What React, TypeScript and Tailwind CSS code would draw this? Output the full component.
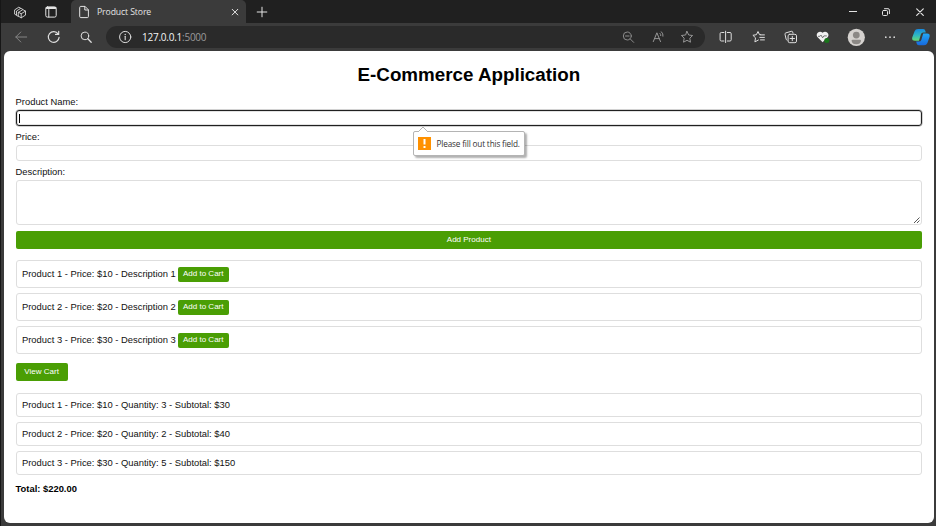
import React from "react";

type IconProps = { className?: string; children: React.ReactNode; size?: number };

function Icon({ className = "", children, size = 14 }: IconProps) {
  return (
    <svg
      width={size}
      height={size}
      viewBox="0 0 14 14"
      fill="none"
      stroke="currentColor"
      strokeWidth="1"
      strokeLinecap="round"
      strokeLinejoin="round"
      className={"shrink-0 " + className}
    >
      {children}
    </svg>
  );
}

const products = [
  { name: "Product 1", price: 10, description: "Description 1" },
  { name: "Product 2", price: 20, description: "Description 2" },
  { name: "Product 3", price: 30, description: "Description 3" },
];

const cart = [
  { name: "Product 1", price: 10, quantity: 3, subtotal: 30 },
  { name: "Product 2", price: 20, quantity: 2, subtotal: 40 },
  { name: "Product 3", price: 30, quantity: 5, subtotal: 150 },
];

const star = "M7 1.4 8.7 5 12.6 5.5 9.8 8.2 10.5 12.2 7 10.3 3.5 12.2 4.2 8.2 1.4 5.5 5.3 5Z";

function TitleBar() {
  return (
    <div className="flex h-[23px] shrink-0 items-center bg-[#202020] text-[#e4e4e4]">
      <Icon className="ml-[12px]">
        <path
          d="M3.3 10.2 1.6 9.1V4.9L5.8 2.2 7.4 3.1M5.4 11.5 3.5 10.3V6L7.8 3.3 9.6 4.3M5.6 7.3 9.9 4.6 12.5 6.1V10.1L8.2 12.8 5.6 11.3ZM5.6 7.3 8.2 8.8 12.5 6.1M8.2 8.8V12.8"
          strokeWidth=".85"
        />
      </Icon>
      <Icon className="ml-[17px]">
        <rect x="1.8" y="1.9" width="10.4" height="10.2" rx="1.6" />
        <path d="M2.6 3H11.4" strokeWidth="2" />
        <path d="M4.8 4.5V12" />
      </Icon>
      <div className="ml-[13px] flex h-full w-[175px] items-center rounded-t-[5px] bg-[#3b3b3b]">
        <Icon className="ml-[6px]">
          <path d="M2.7 2.4Q2.7 1.4 3.7 1.4H8L11.4 4.8V11.6Q11.4 12.6 10.4 12.6H3.7Q2.7 12.6 2.7 11.6ZM7.8 1.6V5H11.2" />
        </Icon>
        <span className="ml-[6px] w-[60px] pt-[2px] font-['Open_Sans',sans-serif] text-[8.7px] tracking-[-0.12px] whitespace-nowrap">
          Product Store
        </span>
        <Icon className="ml-[71px]">
          <path d="m4.2 4.3 5.6 5.6m0-5.6L4.2 9.9" />
        </Icon>
      </div>
      <Icon className="ml-[9px]">
        <path d="M7 2.2V11.8M2.2 7H11.8" />
      </Icon>
      <Icon className="ml-auto">
        <path d="M3.4 6.5H10.6" />
      </Icon>
      <Icon className="ml-[19px]">
        <rect x="3.5" y="5.5" width="5" height="5" rx="1" />
        <path d="M5.5 3.7H9Q10.4 3.7 10.4 5.1V8.6" />
      </Icon>
      <Icon className="mr-[9px] ml-[20px]">
        <path d="m3.7 3.8 6.6 6.6m0-6.6-6.6 6.6" strokeWidth="1.2" />
      </Icon>
    </div>
  );
}

function Toolbar() {
  return (
    <div className="flex h-7 shrink-0 items-center bg-[#3b3b3b] text-[#dedede]">
      <Icon className="ml-[13px] text-[#858585]">
        <path d="M12.7 7H1.8M6.8 2 1.8 7 6.8 12" />
      </Icon>
      <Icon className="ml-[19px]">
        <path d="M11.2 4A5.4 5.4 0 1 0 12.1 7.4M11.7 1.3V4.4H8.5" strokeWidth="1.15" />
      </Icon>
      <Icon className="ml-[18px]">
        <circle cx="5.9" cy="5.9" r="3.8" />
        <path d="m8.8 8.8 3.4 3.4" strokeWidth="1.3" />
      </Icon>
      <div className="ml-[13px] flex h-[22px] w-[599px] items-center rounded-full bg-[#2a2a2a]">
        <Icon className="ml-[12px]">
          <circle cx="7.2" cy="7" r="5.6" />
          <path d="M7.2 6.3V9.7" strokeWidth="1.1" />
          <path d="M7.2 4.3V4.4" strokeWidth="1.3" />
        </Icon>
        <span className="ml-[10px] font-['Open_Sans',sans-serif] text-[10px] tracking-[-0.24px] whitespace-nowrap text-[#9a9a9a]">
          <span className="text-[#f5f5f5]">127.0.0.1</span>:5000
        </span>
        <Icon className="ml-auto text-[#8c8c8c]">
          <circle cx="6.3" cy="6" r="4" />
          <path d="m9.3 9 3.4 3.4M4.5 6H8.1" />
        </Icon>
        <Icon className="ml-[16px] text-[#969696]">
          <path d="M2.3 11.6 5.9 2.8 9.5 11.6M3.6 8.6H8.2M9 3.4Q10 4.3 9.8 5.6M10.4 1.8Q12.5 3.6 12 6.2" />
        </Icon>
        <Icon className="mr-[11px] ml-[15px] text-[#969696]">
          <path d={star} />
        </Icon>
      </div>
      <Icon className="ml-[14px]">
        <path d="M4.9 2.5H2.3Q1.1 2.5 1.1 3.7V9.8Q1.1 11 2.3 11H4.9M8.3 2.5H11Q12.2 2.5 12.2 3.7V9.8Q12.2 11 11 11H8.3M6.6 1.2V12.6" />
      </Icon>
      <Icon className="ml-[19px]">
        <path d="M8.6 4.7H7.5L6 1.5 4.4 4.7 .9 5.3 3.5 7.8 2.9 11.9 6.4 10M8.8 4.9H12.4M7.8 7.4H12.4M8.5 9.9H12.4" />
      </Icon>
      <Icon className="ml-[18px]">
        <path d="M3 10.2Q2.3 9.9 2.1 9.1L1 4.2Q.8 3.2 1.8 2.9L7.4 1.3Q8.4 1.1 8.7 2L9 3.2" />
        <rect x="4.1" y="4.3" width="8.4" height="8.4" rx="1.6" />
        <path d="M8.3 6.3V10.7M6.1 8.5H10.5" />
      </Icon>
      <Icon className="ml-[18px]">
        <path d="M6.6 12.2 1.4 7C-1 4 3.4-.3 6.6 2.8 9.8-.3 14.2 4 11.8 7Z" fill="#f0f0f0" stroke="none" />
        <path d="M2.4 6.3H4L5 5.1 6.6 7.8 7.9 5.9H10.4" stroke="#666" strokeWidth=".9" />
        <circle cx="10.8" cy="10.6" r="2.5" fill="#18751a" stroke="none" />
      </Icon>
      <svg width="18" height="18" viewBox="0 0 18 18" className="ml-[17px] shrink-0">
        <circle cx="9.3" cy="9.3" r="8.6" fill="#d5d2cf" />
        <circle cx="9.3" cy="7.1" r="3.4" fill="#8b8885" />
        <path
          d="M4.6 12.8Q4.6 11.7 5.7 11.7H12.9Q14 11.7 14 12.8Q13.5 16.3 9.3 16.3T4.6 12.8Z"
          fill="#8b8885"
        />
      </svg>
      <Icon className="ml-[18px]">
        <path d="M2.8 7.2V7.2M7 7.2V7.2M11.2 7.2V7.2" strokeWidth="1.7" />
      </Icon>
      <svg width="18" height="18" viewBox="0 0 18 18" className="ml-[15px] shrink-0">
        <defs>
          <linearGradient id="copilot-left" x1="0" y1="0" x2="0" y2="1">
            <stop stopColor="#1689df" />
            <stop offset=".55" stopColor="#30b9c1" />
            <stop offset="1" stopColor="#65da75" />
          </linearGradient>
          <linearGradient id="copilot-right" x1="0" y1="0" x2="0" y2="1">
            <stop stopColor="#22a8f5" />
            <stop offset="1" stopColor="#1769dd" />
          </linearGradient>
        </defs>
        <path
          d="M6 1H11.3Q13 1 13.4 3L13.8 4.6H11.2Q9.4 4.6 8.9 6.3L7 12.7H3Q-.6 12.7.3 9.2L2.6 3.3Q3.5 1 6 1Z"
          fill="url(#copilot-left)"
        />
        <path
          d="M12.1 17.2H6.8Q5 17.2 4.6 15.2L4.2 13.6H6.9Q8.8 13.6 9.3 11.9L11.2 5.5H15Q18.4 5.5 17.5 9L15.4 14.9Q14.4 17.2 12.1 17.2Z"
          fill="url(#copilot-right)"
        />
      </svg>
    </div>
  );
}

function ValidationTip() {
  return (
    <div className="absolute top-[20px] left-[396.5px] z-10 flex h-[25px] w-[112px] items-center rounded-[2px] border border-[#b4b4b4] bg-white shadow-[2px_2px_2px_#00000050]">
      <svg width="10" height="6" viewBox="0 0 10 6" className="absolute top-[-6px] left-[4px]">
        <path d="M0 6 5 1 10 6" fill="#fff" stroke="#b4b4b4" />
      </svg>
      <span className="mb-px ml-[4px] flex h-[13px] w-[13px] items-center justify-center bg-[#ff9100]">
        <svg width="3" height="9" viewBox="0 0 3 9">
          <path d="M.5 0H2.5V5.5H.5ZM.5 7H2.5V9H.5Z" fill="#fff" />
        </svg>
      </span>
      <span className="ml-[5.5px] font-['Open_Sans',sans-serif] text-[8.2px] tracking-[-0.16px] whitespace-nowrap text-[#333]">
        Please fill out this field.
      </span>
    </div>
  );
}

export default function App() {
  return (
    <div className="flex h-[526px] w-[936px] flex-col overflow-hidden border-l border-[#161616] bg-[#3b3b3b] font-['Liberation_Sans',Arial,sans-serif] text-[9.4px] leading-[11px] text-[#111]">
      <TitleBar />
      <Toolbar />
      <main className="mr-[2.5px] ml-[3px] h-[472px] rounded-[6px] bg-white pr-[11.4px] pl-[11.6px]">
        <h1 className="pt-[13px] text-center text-[18.8px] leading-[22px] font-bold text-black">
          E-Commerce Application
        </h1>
        <form className="mt-[10px] flex flex-col">
          <label>Product Name:</label>
          <div className="relative mt-[3px] flex h-[16px] items-center rounded-[3px] border border-[#202020] pl-[2px] shadow-[0_0_0_0.5px_#20202066,inset_0_0_0_0.5px_#20202040]">
            <span className="h-[9px] w-px bg-black" />
            <ValidationTip />
          </div>
          <label className="mt-[5px]">Price:</label>
          <div className="mt-[3px] h-[16px] rounded-[3px] border border-[#dedede]" />
          <label className="mt-[5px]">Description:</label>
          <div className="mt-[3px] flex h-[45px] items-end justify-end rounded-[3px] border border-[#dedede]">
            <svg width="8" height="8" viewBox="0 0 8 8">
              <path d="M1 7 6.5 1.5M4 7 6.5 4.5" stroke="#444" strokeWidth=".9" />
            </svg>
          </div>
          <div className="mt-[5.5px] flex h-[18px] items-center justify-center rounded-[2px] bg-[#4a9e04] pb-px text-[8px] text-white">
            Add Product
          </div>
        </form>
        <ul className="mt-[11.5px] flex flex-col gap-[5px]">
          {products.map((p) => (
            <li
              key={p.name}
              className="flex h-[28px] items-center rounded-[3px] border border-[#dedede] pl-[5.4px]"
            >
              <span className="pb-[2px]">
                {p.name} - Price: ${p.price} - {p.description}
              </span>
              <span className="ml-[2px] flex h-[15px] w-[51px] items-center justify-center rounded-[2px] bg-[#4a9e04] pb-px text-[8px] whitespace-nowrap text-white">
                Add to Cart
              </span>
            </li>
          ))}
        </ul>
        <div className="mt-[9px] flex h-[18px] w-[52px] items-center justify-center rounded-[2px] bg-[#4a9e04] pb-px text-[8px] text-white">
          View Cart
        </div>
        <ul className="mt-[12px] flex flex-col gap-[5px]">
          {cart.map((c) => (
            <li
              key={c.name}
              className="flex h-[24px] items-center rounded-[3px] border border-[#dedede] pb-px pl-[5.4px]"
            >
              {c.name} - Price: ${c.price} - Quantity: {c.quantity} - Subtotal: ${c.subtotal}
            </li>
          ))}
        </ul>
        <p className="mt-[8px] font-bold text-black">Total: $220.00</p>
      </main>
    </div>
  );
}
